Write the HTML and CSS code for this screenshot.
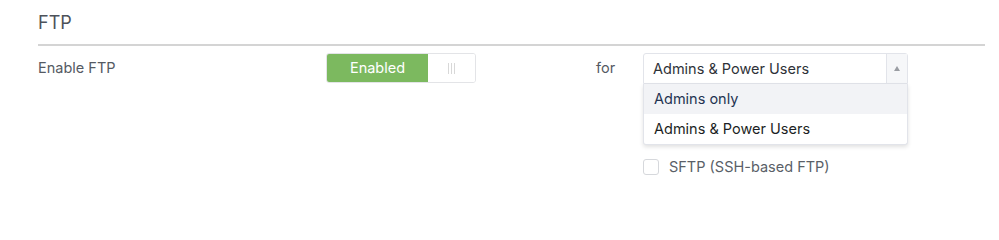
FILE: index.html
```html
<!DOCTYPE html>
<html>
<head>
<meta charset="utf-8">
<link rel="stylesheet" href="styles.css">
</head>
<body>
<div class="section">
  <h2 class="section-title">FTP</h2>
  <div class="row">
    <div class="label">Enable FTP</div>
    <div class="toggle">
      <div class="toggle-on">Enabled</div>
      <div class="toggle-handle"><span class="grip"></span></div>
    </div>
    <div class="for">for</div>
    <div class="right">
      <div class="select-wrap">
        <div class="select">
          <div class="select-value">Admins &amp; Power Users</div>
          <div class="select-arrow"><span class="tri"></span></div>
        </div>
        <div class="menu">
          <div class="option active">Admins only</div>
          <div class="option">Admins &amp; Power Users</div>
        </div>
      </div>
      <label class="check">
        <span class="box"></span>
        <span class="check-label">SFTP (SSH-based FTP)</span>
      </label>
    </div>
  </div>
</div>
</body>
</html>
```
FILE: styles.css
```css
html, body {
  margin: 0;
  padding: 0;
  background: #fff;
}
body {
  font-family: Inter, "Noto Sans", sans-serif;
  color: #4a4f58;
  width: 999px;
  height: 200px;
  overflow: hidden;
}
.section {
  padding: 0 14px 0 38px;
}
.section-title {
  margin: 0;
  padding-top: 11px;
  height: 33px;
  font-size: 18px;
  font-weight: 400;
  line-height: 23px;
  color: #4d525a;
  border-bottom: 2px solid #d4d4d4;
  box-sizing: content-box;
}
.row {
  display: flex;
  align-items: flex-start;
  padding-top: 7px;
}
.label {
  width: 288px;
  font-size: 14.5px;
  line-height: 30px;
  color: #555a63;
}
.toggle {
  display: flex;
  width: 148px;
  height: 28px;
  border: 1px solid #e3e4e7;
  border-radius: 3px;
  overflow: hidden;
}
.toggle-on {
  width: 101px;
  background: #7cb95f;
  color: #fff;
  font-size: 14.5px;
  line-height: 28px;
  text-align: center;
}
.toggle-handle {
  flex: 1;
  display: flex;
  align-items: center;
  justify-content: center;
  background: #fff;
}
.grip {
  width: 5px;
  height: 11px;
  border-left: 1px solid #d8d8d8;
  border-right: 1px solid #d8d8d8;
  position: relative;
}
.grip::after {
  content: "";
  position: absolute;
  left: 2px;
  top: 0;
  width: 1px;
  height: 11px;
  background: #d8d8d8;
}
.for {
  width: 167px;
  padding-left: 120px;
  font-size: 14.5px;
  line-height: 30px;
  color: #555a63;
  box-sizing: border-box;
}
.right {
  display: flex;
  flex-direction: column;
}
.select-wrap {
  position: relative;
  width: 265px;
  height: 31px;
}
.select {
  display: flex;
  height: 29px;
  border: 1px solid #e2e4ea;
  border-radius: 3px 3px 0 0;
  background: #fff;
}
.select-value {
  flex: 1;
  font-size: 14.5px;
  line-height: 29px;
  padding-left: 9px;
  color: #2e3238;
}
.select-arrow {
  width: 20px;
  border-left: 1px solid #e2e4ea;
  background: #f6f7f9;
  display: flex;
  align-items: center;
  justify-content: center;
}
.tri {
  width: 0;
  height: 0;
  border-left: 3px solid transparent;
  border-right: 3px solid transparent;
  border-bottom: 5px solid #9a9da3;
}
.menu {
  position: absolute;
  left: 0;
  top: 31px;
  width: 265px;
  box-sizing: border-box;
  background: #fff;
  border: 1px solid #e2e4ea;
  border-top: none;
  border-radius: 0 0 3px 3px;
  box-shadow: 0 2px 4px rgba(0,0,0,0.12);
}
.option {
  height: 30px;
  line-height: 30px;
  font-size: 14.5px;
  padding-left: 10px;
  color: #1c1f24;
}
.option.active {
  background: #f2f3f6;
  color: #243352;
}
.check {
  display: flex;
  align-items: center;
  margin-top: 74px;
}
.box {
  width: 14px;
  height: 14px;
  border: 1px solid #d6d8dc;
  border-radius: 3px;
  background: #fff;
}
.check-label {
  margin-left: 10px;
  font-size: 14.5px;
  color: #5a5f68;
}
```
